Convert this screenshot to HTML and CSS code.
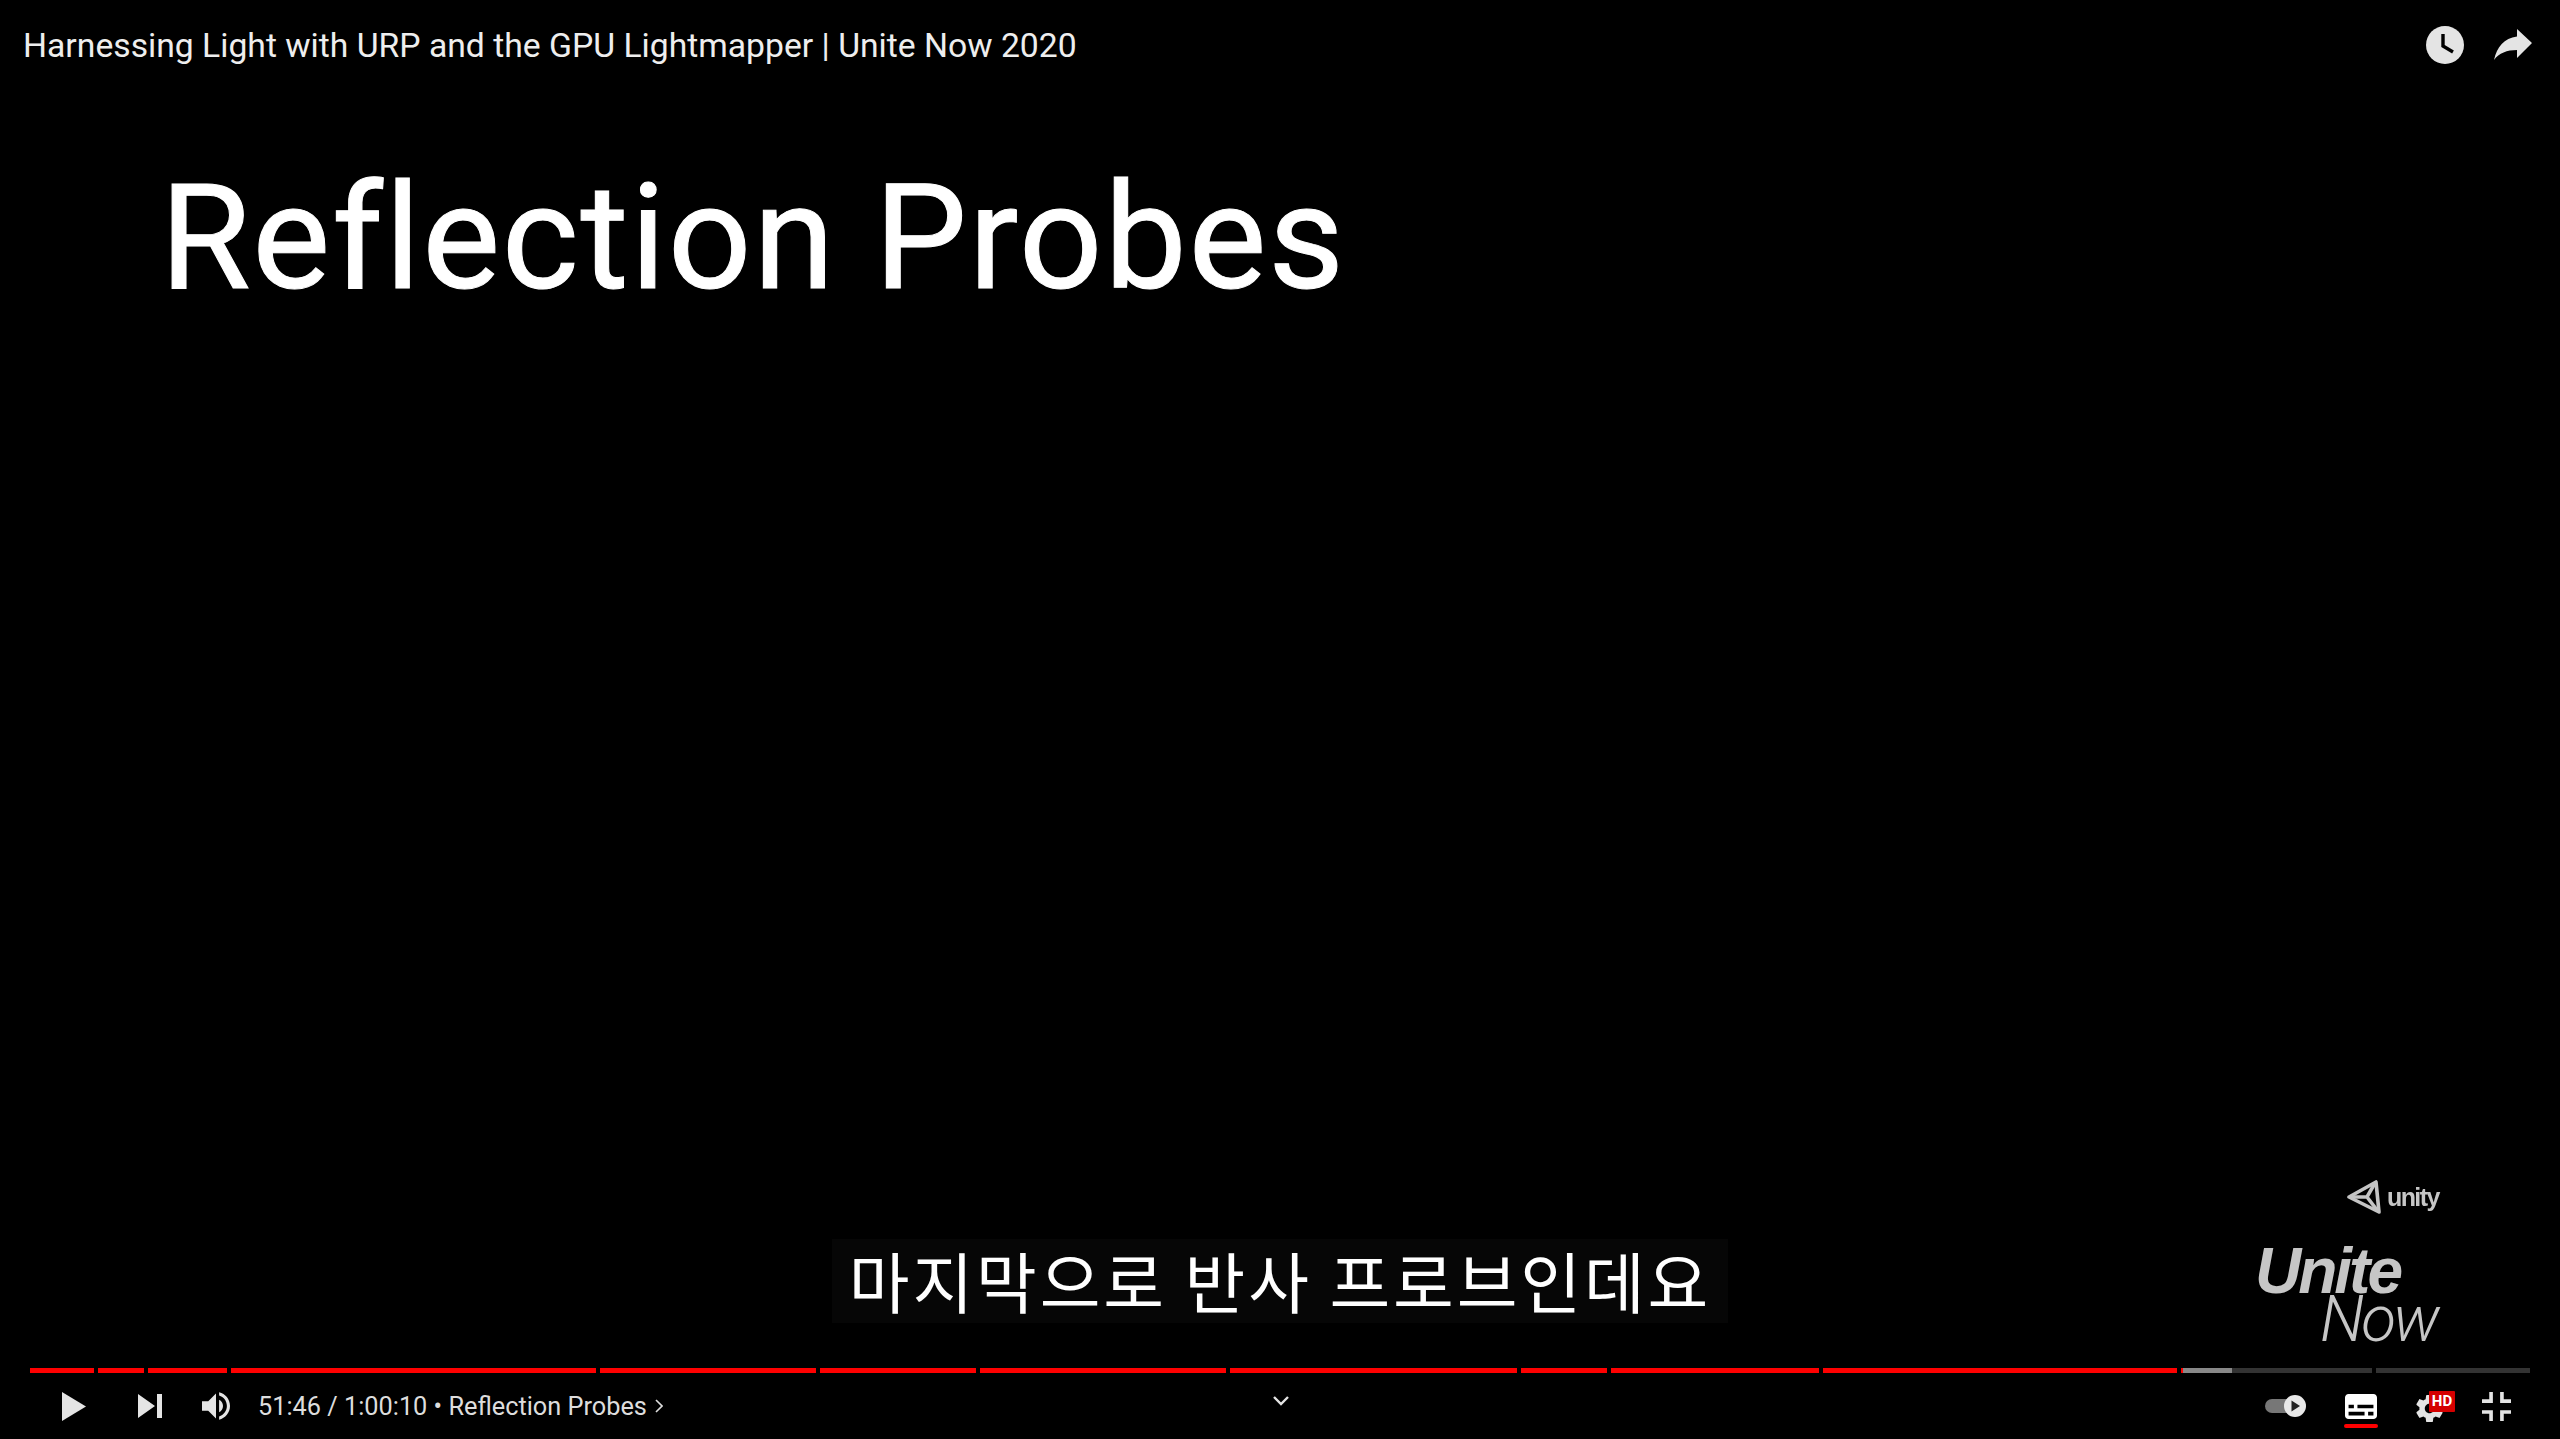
FILE: index.html
```html
<!DOCTYPE html>
<html lang="en">
<head>
    <meta charset="UTF-8">
    <meta name="viewport" content="width=device-width, initial-scale=1.0">
    <title>Harnessing Light with URP and the GPU Lightmapper</title>
    <link rel="stylesheet" href="styles.css">
</head>
<body>
    <div class="player">
        <div class="stage">
            <!-- Top bar -->
            <div class="top-bar">
                <div class="video-title">Harnessing Light with URP and the GPU Lightmapper | Unite Now 2020</div>
                <svg class="clock-icon" viewBox="0 0 38 38">
                    <circle cx="19" cy="19" r="19" fill="#e4e4e4"/>
                    <polyline points="17,8 17,20 27,26" fill="none" stroke="#000" stroke-width="3.4"/>
                </svg>
                <svg class="share-icon" viewBox="0 0 38 32">
                    <path d="M23 0 L38 14 L23 29 V21 C13 21 5 24 0 31 C3 18 10 9 23 7.5 Z" fill="#e4e4e4"/>
                </svg>
            </div>

            <h1 class="slide-title">Reflection Probes</h1>

            <!-- Burned in logo -->
            <div class="brand">
                <div class="unity-row">
                    <svg class="unity-icon" viewBox="0 0 34 34">
                        <path d="M2 17 L29 2 L32 32 Z" fill="none" stroke="#c4c4c4" stroke-width="3.6" stroke-linejoin="round"/>
                        <path d="M4 17 H20 L28 3 M20 17 L30 30" fill="none" stroke="#c4c4c4" stroke-width="3.6"/>
                    </svg>
                    <span class="unity-text">unity</span>
                </div>
                <div class="unite-text">Unite</div>
                <div class="now-text">Now</div>
            </div>

            <div class="caption">마지막으로 반사 프로브인데요</div>
        </div>

        <!-- Progress bar chapters -->
        <div class="progress">
            <div class="chapter played" style="width: 64px"></div>
            <div class="chapter played" style="width: 46px"></div>
            <div class="chapter played" style="width: 79px"></div>
            <div class="chapter played" style="width: 365px"></div>
            <div class="chapter played" style="width: 216px"></div>
            <div class="chapter played" style="width: 156px"></div>
            <div class="chapter played" style="width: 246px"></div>
            <div class="chapter played" style="width: 287px"></div>
            <div class="chapter played" style="width: 86px"></div>
            <div class="chapter played" style="width: 208px"></div>
            <div class="chapter played" style="width: 354px"></div>
            <div class="chapter current" style="width: 191px">
                <div class="current-red"></div>
                <div class="buffered"></div>
            </div>
            <div class="chapter" style="width: 154px"></div>
        </div>

        <!-- Controls -->
        <div class="controls">
            <svg class="play-icon" viewBox="0 0 24 29">
                <path d="M0 0 L24 14.5 L0 29 Z" fill="#e4e4e4"/>
            </svg>
            <svg class="next-icon" viewBox="12 12 12 12">
                <path d="M12 24 L20.5 18 L12 12 Z M21.5 12 V24 H24 V12 Z" fill="#e4e4e4"/>
            </svg>
            <svg class="volume-icon" viewBox="8 9 18 18">
                <path d="M8,21 L12,21 L17,26 L17,10 L12,15 L8,15 L8,21 Z M19,14 L19,22 C20.48,21.32 21.5,19.77 21.5,18 C21.5,16.26 20.48,14.74 19,14 Z M19,11.29 C21.89,12.15 24,14.83 24,18 C24,21.17 21.89,23.85 19,24.71 L19,26.77 C23.01,25.86 26,22.28 26,18 C26,13.72 23.01,10.14 19,9.23 L19,11.29 Z" fill="#e4e4e4"/>
            </svg>
            <div class="time">51:46 / 1:00:10 • Reflection Probes</div>
            <svg class="chapter-arrow" viewBox="0 0 8 14">
                <path d="M1 1 L7 7 L1 13" fill="none" stroke="#ddd" stroke-width="1.6"/>
            </svg>

            <svg class="more-arrow" viewBox="0 0 16 10">
                <path d="M1 1 L8 8 L15 1" fill="none" stroke="#e4e4e4" stroke-width="2.4"/>
            </svg>

            <div class="controls-right">
                <div class="autoplay">
                    <div class="autoplay-track"></div>
                    <svg class="autoplay-knob" viewBox="0 0 22 22">
                        <circle cx="11" cy="11" r="11" fill="#e8e8e8"/>
                        <path d="M7.5 5.5 L16 11 L7.5 16.5 Z" fill="#222"/>
                    </svg>
                </div>
                <div class="subtitles">
                    <svg class="subtitles-icon" viewBox="9 11 18 14">
                        <path fill-rule="evenodd" d="M11,11 C9.89,11 9,11.9 9,13 L9,23 C9,24.1 9.89,25 11,25 L25,25 C26.1,25 27,24.1 27,23 L27,13 C27,11.9 26.1,11 25,11 Z M11,17 L14,17 L14,19 L11,19 Z M20,23 L11,23 L11,21 L20,21 Z M25,23 L22,23 L22,21 L25,21 Z M25,19 L16,19 L16,17 L25,17 Z" fill="#fff"/>
                    </svg>
                    <div class="subtitles-on"></div>
                </div>
                <div class="settings">
                    <svg class="gear-icon" viewBox="10 10 16 16">
                        <path d="m 23.94,18.78 c .03,-0.25 .05,-0.51 .05,-0.78 0,-0.27 -0.02,-0.52 -0.05,-0.78 l 1.68,-1.32 c .15,-0.12 .19,-0.33 .09,-0.51 l -1.6,-2.76 c -0.09,-0.17 -0.31,-0.24 -0.48,-0.17 l -1.99,.8 c -0.41,-0.32 -0.86,-0.58 -1.35,-0.78 l -0.30,-2.12 c -0.02,-0.19 -0.19,-0.33 -0.39,-0.33 l -3.2,0 c -0.2,0 -0.36,.14 -0.39,.33 l -0.30,2.12 c -0.48,.2 -0.93,.47 -1.35,.78 l -1.99,-0.8 c -0.18,-0.07 -0.39,0 -0.48,.17 l -1.6,2.76 c -0.10,.17 -0.05,.39 .09,.51 l 1.68,1.32 c -0.03,.25 -0.05,.52 -0.05,.78 0,.26 .02,.52 .05,.78 l -1.68,1.32 c -0.15,.12 -0.19,.33 -0.09,.51 l 1.6,2.76 c .09,.17 .31,.24 .48,.17 l 1.99,-0.8 c .41,.32 .86,.58 1.35,.78 l .30,2.12 c .02,.19 .19,.33 .39,.33 l 3.2,0 c .2,0 .36,-0.14 .39,-0.33 l .30,-2.12 c .48,-0.2 .93,-0.47 1.35,-0.78 l 1.99,.8 c .18,.07 .39,0 .48,-0.17 l 1.6,-2.76 c .09,-0.17 .05,-0.39 -0.09,-0.51 l -1.68,-1.32 0,0 z m -5.94,2.01 c -1.54,0 -2.8,-1.25 -2.8,-2.8 0,-1.54 1.25,-2.8 2.8,-2.8 1.54,0 2.8,1.25 2.8,2.8 0,1.54 -1.25,2.8 -2.8,2.8 l 0,0 z" fill="#e4e4e4"/>
                    </svg>
                    <div class="hd-badge">HD</div>
                </div>
                <svg class="exit-icon" viewBox="10 10 16 16">
                    <path d="m 14,14 -4,0 0,2 6,0 0,-6 -2,0 0,4 0,0 z m 8,-4 -2,0 0,6 6,0 0,-2 -4,0 0,-4 0,0 z m -2,16 2,0 0,-4 4,0 0,-2 -6,0 0,6 0,0 z m -10,-4 4,0 0,4 2,0 0,-6 -6,0 0,2 0,0 z" fill="#e4e4e4"/>
                </svg>
            </div>
        </div>
    </div>
</body>
</html>
```

FILE: styles.css
```css
body {
    margin: 0;
    background-color: #000;
    font-family: Roboto, 'Liberation Sans', sans-serif;
    color: #eee;
}

.player {
    height: 100vh;
    display: flex;
    flex-direction: column;
    overflow: hidden;
    position: relative;
}

.stage {
    flex: 1;
    position: relative;
    display: flex;
    flex-direction: column;
    min-height: 0;
}

.top-bar {
    display: flex;
    align-items: center;
    height: 90px;
    padding: 0 28px 0 23px;
}

.video-title {
    flex: 1;
    font-size: 33.7px;
    white-space: nowrap;
}

.clock-icon {
    width: 38px;
    height: 38px;
    margin-right: 30px;
}

.share-icon {
    width: 38px;
    height: 32px;
}

.slide-title {
    margin: 63px 0 0 160px;
    font-size: 147px;
    font-weight: 400;
    font-variant-ligatures: none;
    letter-spacing: 1.7px;
    line-height: 170px;
    color: #fff;
    -webkit-text-stroke: 1px #fff;
    white-space: nowrap;
}

.brand {
    position: absolute;
    left: 2255px;
    top: 1180px;
    width: 190px;
    color: #c6c6c6;
    filter: blur(0.5px);
}

.unity-row {
    display: flex;
    align-items: center;
    margin-left: 92px;
    gap: 6px;
}

.unity-icon {
    width: 34px;
    height: 34px;
}

.unity-text {
    font-family: 'Liberation Sans', sans-serif;
    font-size: 25px;
    font-weight: 700;
    letter-spacing: -1.6px;
    line-height: 30px;
}

.unite-text {
    margin-top: 32px;
    font-family: 'Liberation Sans', sans-serif;
    font-size: 64px;
    font-weight: 700;
    font-style: italic;
    letter-spacing: -3px;
    line-height: 50px;
}

.now-text {
    margin-left: 65px;
    font-family: Roboto, sans-serif;
    font-size: 64px;
    font-weight: 300;
    font-style: italic;
    letter-spacing: -3px;
    line-height: 48px;
}

.caption {
    margin: auto auto 45px;
    padding: 0 17px 4px;
    background-color: rgba(8, 8, 8, 0.75);
    font-family: 'Noto Sans CJK KR', sans-serif;
    font-size: 66px;
    letter-spacing: 2.9px;
    line-height: 80px;
    color: #fff;
    white-space: nowrap;
}

.progress {
    display: flex;
    gap: 4px;
    height: 5px;
    padding-left: 30px;
}

.chapter {
    height: 5px;
    background-color: #333;
    display: flex;
}

.played {
    background-color: #f00;
}

.current-red {
    width: 2px;
    background-color: #f00;
}

.buffered {
    width: 49px;
    background-color: #888;
}

.controls {
    height: 66px;
    display: flex;
    align-items: center;
    padding-left: 62px;
    padding-right: 49px;
    position: relative;
}

.play-icon {
    width: 24px;
    height: 29px;
}

.next-icon {
    width: 24px;
    height: 24px;
    margin-left: 52px;
}

.volume-icon {
    width: 28px;
    height: 28px;
    margin-left: 40px;
}

.time {
    margin-left: 28px;
    font-size: 25.3px;
    color: #ddd;
    white-space: nowrap;
}

.chapter-arrow {
    width: 8px;
    height: 14px;
    margin-left: 8px;
}

.more-arrow {
    position: absolute;
    left: 1273px;
    top: 23px;
    width: 16px;
    height: 10px;
}

.controls-right {
    margin-left: auto;
    display: flex;
    align-items: center;
}

.autoplay {
    width: 41px;
    height: 22px;
    display: flex;
    align-items: center;
    position: relative;
}

.autoplay-track {
    width: 34px;
    height: 14px;
    border-radius: 7px;
    background-color: #777;
}

.autoplay-knob {
    position: absolute;
    right: 0;
    top: 0;
    width: 22px;
    height: 22px;
}

.subtitles {
    position: relative;
    margin-left: 39px;
    width: 32px;
    height: 25px;
}

.subtitles-icon {
    display: block;
    width: 32px;
    height: 25px;
}

.subtitles-on {
    position: absolute;
    left: -1px;
    top: 30px;
    width: 34px;
    height: 4px;
    border-radius: 2px;
    background-color: #f00;
}

.settings {
    position: relative;
    margin-left: 39px;
    margin-top: 4px;
    width: 27px;
    height: 27px;
}

.gear-icon {
    display: block;
    width: 27px;
    height: 27px;
}

.hd-badge {
    position: absolute;
    left: 13px;
    top: -4px;
    width: 26px;
    height: 21px;
    border-radius: 1px;
    background-color: #d50000;
    color: #fff;
    font-size: 15px;
    font-weight: 700;
    line-height: 21px;
    text-align: center;
}

.exit-icon {
    width: 29px;
    height: 29px;
    margin-left: 39px;
}
```
